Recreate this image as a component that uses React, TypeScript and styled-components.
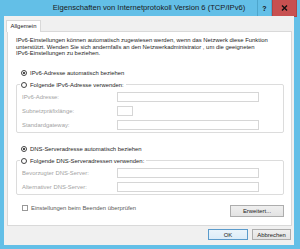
import React from "react";
import styled, { createGlobalStyle } from "styled-components";

const GlobalStyle = createGlobalStyle`
  html, body {
    margin: 0;
    padding: 0;
    background: #ffffff;
  }
  body {
    font-family: "Liberation Sans", Arial, sans-serif;
  }
`;

const FONT = "5.9px";

export default function App() {
  return (
    <>
      <GlobalStyle />
      <Window>
        <TitleBar>
          <Title>Eigenschaften von Internetprotokoll Version 6 (TCP/IPv6)</Title>
          <CaptionButtons>
            <CaptionButton>?</CaptionButton>
            <CaptionButton close>
              <svg width="7" height="6" viewBox="0 0 7 6">
                <path d="M1 0.5 L6 5.5 M6 0.5 L1 5.5" stroke="#111" strokeWidth="1.4" />
              </svg>
            </CaptionButton>
          </CaptionButtons>
        </TitleBar>
        <Client>
          <TabStrip>
            <Tab>Allgemein</Tab>
          </TabStrip>
          <Panel>
            <Description>
              IPv6-Einstellungen können automatisch zugewiesen werden, wenn das Netzwerk diese Funktion
              <br />
              unterstützt. Wenden Sie sich andernfalls an den Netzwerkadministrator , um die geeigneten
              <br />
              IPv6-Einstellungen zu beziehen.
            </Description>

            <RadioRow spaced>
              <Radio checked />
              <span>IPv6-Adresse automatisch beziehen</span>
            </RadioRow>

            <Group>
              <Legend>
                <RadioRow>
                  <Radio />
                  <span>Folgende IPv6-Adresse verwenden:</span>
                </RadioRow>
              </Legend>
              <FieldRow>
                <FieldLabel>IPv6-Adresse:</FieldLabel>
                <Input />
              </FieldRow>
              <FieldRow>
                <FieldLabel>Subnetzpräfixlänge:</FieldLabel>
                <Input narrow />
              </FieldRow>
              <FieldRow>
                <FieldLabel>Standardgateway:</FieldLabel>
                <Input />
              </FieldRow>
            </Group>

            <RadioRow spaced>
              <Radio checked />
              <span>DNS-Serveradresse automatisch beziehen</span>
            </RadioRow>

            <Group>
              <Legend>
                <RadioRow>
                  <Radio />
                  <span>Folgende DNS-Serveradressen verwenden:</span>
                </RadioRow>
              </Legend>
              <FieldRow>
                <FieldLabel>Bevorzugter DNS-Server:</FieldLabel>
                <Input />
              </FieldRow>
              <FieldRow>
                <FieldLabel>Alternativer DNS-Server:</FieldLabel>
                <Input />
              </FieldRow>
            </Group>

            <OptionsRow>
              <CheckRow>
                <CheckBox />
                <span>Einstellungen beim Beenden überprüfen</span>
              </CheckRow>
              <Button wide>Erweitert...</Button>
            </OptionsRow>
          </Panel>
          <Footer>
            <Button isDefault>OK</Button>
            <Button>Abbrechen</Button>
          </Footer>
        </Client>
      </Window>
    </>
  );
}

const Window = styled.div`
  width: 300px;
  height: 249px;
  box-sizing: border-box;
  background: #63bfe7;
  padding: 0 6px 4px 4px;
  display: flex;
  flex-direction: column;
  overflow: hidden;
`;

const TitleBar = styled.div`
  height: 16px;
  display: flex;
  align-items: flex-start;
`;

const Title = styled.div`
  flex: 1;
  padding-left: 37px;
  text-align: center;
  font-size: 7.6px;
  line-height: 16px;
  color: #1a1a1a;
  white-space: nowrap;
`;

const CaptionButtons = styled.div`
  display: flex;
  margin-right: -3px;
`;

const CaptionButton = styled.div<{ close?: boolean }>`
  width: ${({ close }) => (close ? "25px" : "15px")};
  height: 17px;
  box-sizing: border-box;
  display: flex;
  align-items: center;
  justify-content: center;
  font-size: 7px;
  font-weight: bold;
  color: #111;
  background: ${({ close }) => (close ? "#c75050" : "#63bfe7")};
  border: 1px solid ${({ close }) => (close ? "#b04545" : "#4ea6cc")};
  border-top: none;
`;

const Client = styled.div`
  flex: 1;
  background: #f0f0f0;
  display: flex;
  flex-direction: column;
  padding: 4px 2px 5px 3px;
`;

const TabStrip = styled.div`
  display: flex;
  height: 12px;
  position: relative;
  z-index: 1;
  margin-bottom: -1px;
`;

const Tab = styled.div`
  margin-left: -1px;
  width: 35px;
  box-sizing: border-box;
  background: #ffffff;
  border: 1px solid #d9d9d9;
  border-bottom: none;
  font-size: ${FONT};
  line-height: 11px;
  text-align: center;
  color: #222;
`;

const Panel = styled.div`
  flex: 1;
  background: #ffffff;
  border: 1px solid #d9d9d9;
  padding: 5px 7px 0 8px;
  display: flex;
  flex-direction: column;
  font-size: ${FONT};
  color: #1e1e1e;
`;

const Description = styled.div`
  line-height: 6.6px;
  white-space: nowrap;
`;

const RadioRow = styled.div<{ spaced?: boolean }>`
  display: flex;
  align-items: center;
  gap: 3px;
  height: 8px;
  padding-left: ${({ spaced }) => (spaced ? "5px" : "0")};
  margin-top: ${({ spaced }) => (spaced ? "12px" : "0")};
  margin-bottom: ${({ spaced }) => (spaced ? "4px" : "0")};
  white-space: nowrap;
  color: #1e1e1e;
`;

const Radio = styled.span<{ checked?: boolean }>`
  width: 6px;
  height: 6px;
  box-sizing: border-box;
  border-radius: 50%;
  border: 1px solid #444;
  background: #fff;
  display: flex;
  align-items: center;
  justify-content: center;

  &::after {
    content: "";
    display: ${({ checked }) => (checked ? "block" : "none")};
    width: 2px;
    height: 2px;
    border-radius: 50%;
    background: #111;
  }
`;

const Group = styled.fieldset`
  margin: 0;
  padding: 3px 6px 2px 5px;
  border: 1px solid #dcdcdc;
  border-radius: 2px;
  display: flex;
  flex-direction: column;
  gap: 4px;
`;

const Legend = styled.legend`
  padding: 0 2px 0 1px;
  margin-left: -2px;
`;

const FieldRow = styled.div`
  display: flex;
  align-items: center;
  height: 10px;
`;

const FieldLabel = styled.span`
  width: 95px;
  color: #a3a3a3;
  white-space: nowrap;
`;

const Input = styled.div<{ narrow?: boolean }>`
  width: ${({ narrow }) => (narrow ? "16px" : "142px")};
  height: 10px;
  box-sizing: border-box;
  border: 1px solid #d6d6d6;
  background: #fff;
`;

const OptionsRow = styled.div`
  display: flex;
  justify-content: space-between;
  align-items: flex-start;
  margin-top: 10px;
`;

const CheckRow = styled.div`
  display: flex;
  align-items: center;
  gap: 3px;
  height: 8px;
  margin-top: -1px;
  padding-left: 6px;
  color: #5a5a5a;
  white-space: nowrap;
`;

const CheckBox = styled.span`
  width: 6px;
  height: 6px;
  box-sizing: border-box;
  border: 1px solid #999;
  background: #fff;
`;

const Footer = styled.div`
  display: flex;
  justify-content: flex-end;
  gap: 4px;
  margin-top: 3px;
  padding-right: 1px;
`;

const Button = styled.div<{ wide?: boolean; isDefault?: boolean }>`
  width: ${({ wide, isDefault }) => (wide ? "54px" : isDefault ? "40px" : "39px")};
  height: ${({ wide }) => (wide ? "12px" : "11px")};
  box-sizing: border-box;
  display: flex;
  align-items: center;
  justify-content: center;
  font-size: ${FONT};
  color: #222;
  background: ${({ isDefault }) =>
    isDefault ? "linear-gradient(#eaf4fb, #dcecf8)" : "linear-gradient(#efefef, #e3e3e3)"};
  border: 1px solid ${({ isDefault }) => (isDefault ? "#5b9bcb" : "#adadad")};
  white-space: nowrap;
`;
